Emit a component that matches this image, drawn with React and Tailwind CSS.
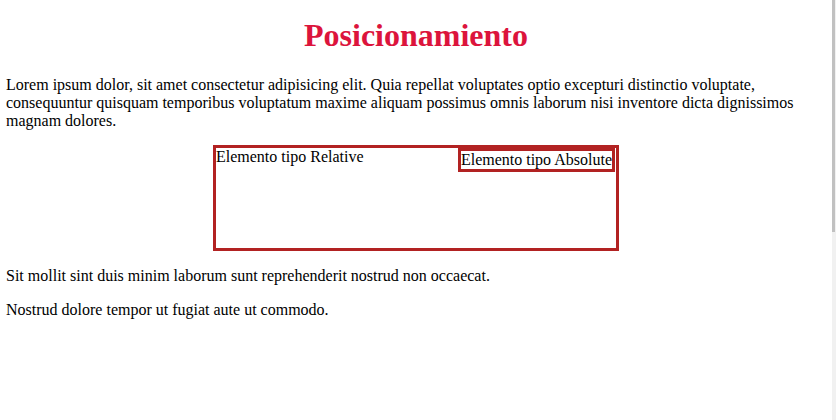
export default function App() {
  return (
    <div className="relative min-h-[420px] w-[832px] bg-white px-[6px] font-['Liberation_Serif',serif] text-base text-black">
      <h1 className="pt-[18px] pb-[23px] text-center text-[32px] font-bold leading-[35px] text-[#dc143c]">
        Posicionamiento
      </h1>
      <p className="leading-[18px]">
        Lorem ipsum dolor, sit amet consectetur adipisicing elit. Quia repellat voluptates optio excepturi distinctio
        voluptate, consequuntur quisquam temporibus voluptatum maxime aliquam possimus omnis laborum nisi inventore
        dicta dignissimos magnam dolores.
      </p>
      <div className="relative mx-auto mt-[15px] h-[106px] w-[406px] border-[3px] border-[#b22222] leading-[18px]">
        Elemento tipo Relative
        <div className="absolute top-0 right-[1px] border-[3px] border-[#b22222] leading-[18px]">Elemento tipo Absolute</div>
      </div>
      <p className="mt-4 leading-[18px]">Sit mollit sint duis minim laborum sunt reprehenderit nostrud non occaecat.</p>
      <p className="mt-4 leading-[18px]">Nostrud dolore tempor ut fugiat aute ut commodo.</p>
      <div className="fixed top-0 right-0 h-[420px] w-[4px] bg-[#f1f1f1]">
        <div className="h-[232px] w-[3px] bg-[#c1c1c1]" />
      </div>
    </div>
  );
}
